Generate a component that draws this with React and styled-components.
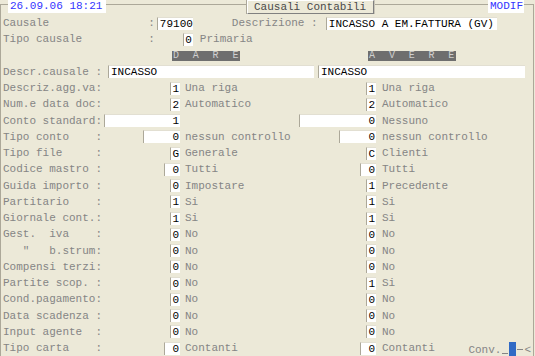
import styled, { createGlobalStyle } from "styled-components";

const GlobalStyle = createGlobalStyle`
    html, body {
        margin: 0;
        padding: 0;
        background: #ece9d8;
    }
    body {
        width: 535px;
        height: 356px;
        overflow: hidden;
        font-family: "Liberation Mono", "Courier New", monospace;
        font-size: 11px;
    }
`;

const Window = styled.div`
    width: 535px;
    height: 356px;
    box-sizing: border-box;
    padding-top: 4px;
    background: #ece9d8;
    overflow: hidden;
`;

const Frame = styled.div`
    height: 100%;
    box-sizing: border-box;
    margin-right: 1px;
    padding-left: 2px;
    border: 1px solid #aca899;
    border-bottom: none;
`;

const TopBar = styled.div`
    display: flex;
    align-items: flex-start;
    height: 15px;
    margin-top: -5px;
`;

const Badge = styled.div`
    margin-left: ${p => p.$ml}px;
    width: ${p => p.$w}px;
    height: 13px;
    box-sizing: border-box;
    padding-left: 2px;
    line-height: 13px;
    background: #fff;
    color: #3434ff;
    white-space: pre;
`;

const TitleTab = styled.div`
    margin-left: 141px;
    width: 127px;
    height: 14px;
    box-sizing: border-box;
    padding-left: 6px;
    line-height: 12px;
    background: #ece9d8;
    color: #4a4a4a;
    border: 1px solid #fff;
    border-right-color: #808080;
    border-bottom-color: #808080;
    box-shadow: -1px 0 0 #aca899, 1px 0 0 #c8c5b8;
`;

const Row = styled.div`
    display: flex;
    align-items: center;
    height: 16.25px;
    white-space: pre;
`;

const GridRow = styled.div`
    display: grid;
    grid-template-columns: 177px 116px 80px 1fr;
    align-items: center;
    height: 16.25px;
    white-space: pre;
`;

const LeftCell = styled.div`
    display: flex;
    justify-content: space-between;
    align-items: center;
`;

const BoxCell = styled.div`
    display: flex;
    justify-content: flex-end;
    align-items: center;
`;

const Label = styled.span`
    color: #858585;
    margin-left: ${p => p.$ml || 0}px;
    width: ${p => (p.$w ? `${p.$w}px` : "auto")};
    flex-shrink: 0;
`;

const Desc = styled.span`
    color: #858585;
    padding-left: ${p => p.$pl || 0}px;
    margin-left: ${p => p.$ml || 0}px;
`;

const Field = styled.span`
    display: block;
    flex-shrink: 0;
    width: ${p => p.$w}px;
    height: 13px;
    box-sizing: border-box;
    margin-left: ${p => p.$ml || 0}px;
    padding: ${p => (p.$left ? "0 0 0 2px" : "0 1px 0 0")};
    text-align: ${p => (p.$left ? "left" : "right")};
    line-height: 13px;
    background: #fff;
    color: #000;
    border-left: 1px solid #aca899;
    border-top: 1px solid #e2dfd2;
    overflow: hidden;
`;

const SectionTag = styled.div`
    margin-left: ${p => p.$ml}px;
    width: ${p => p.$w}px;
    height: 10px;
    font-size: 10px;
    line-height: 10px;
    letter-spacing: 0.6px;
    background: #6e6e6e;
    color: #cfcfcf;
    text-align: center;
    overflow: hidden;
`;

const LastCell = styled.div`
    display: flex;
    align-items: center;
    padding: 0 2px 0 6px;
`;

const Conv = styled.div`
    display: flex;
    align-items: flex-end;
    gap: 1px;
    margin-left: auto;
    height: 16px;
    color: #858585;
`;

const Dash = styled.span`
    width: 6px;
    height: 1px;
    margin-bottom: ${p => p.$mb}px;
    background: #858585;
`;

const Cursor = styled.span`
    width: 7px;
    height: 14px;
    background: #316ac5;
`;

const rows = [
    { label: "Descriz.agg.va:", l: ["1", 10, "Una riga"], r: ["1", 10, "Una riga"] },
    { label: "Num.e data doc:", l: ["2", 10, "Automatico"], r: ["2", 10, "Automatico"] },
    { label: "Conto standard:", l: ["1", 76, ""], r: ["0", 77, "Nessuno"] },
    { label: "Tipo conto    :", l: ["0", 37, "nessun controllo"], r: ["0", 37, "nessun controllo"] },
    { label: "Tipo file     :", l: ["G", 10, "Generale"], r: ["C", 10, "Clienti"] },
    { label: "Codice mastro :", l: ["0", 16, "Tutti"], r: ["0", 16, "Tutti"] },
    { label: "Guida importo :", l: ["0", 10, "Impostare"], r: ["1", 10, "Precedente"] },
    { label: "Partitario    :", l: ["1", 10, "Si"], r: ["1", 10, "Si"] },
    { label: "Giornale cont.:", l: ["1", 10, "Si"], r: ["1", 10, "Si"] },
    { label: "Gest.  iva    :", l: ["0", 10, "No"], r: ["0", 10, "No"] },
    { label: "   \"   b.strum:", l: ["0", 10, "No"], r: ["0", 10, "No"] },
    { label: "Compensi terzi:", l: ["0", 10, "No"], r: ["0", 10, "No"] },
    { label: "Partite scop. :", l: ["0", 10, "No"], r: ["1", 10, "Si"] },
    { label: "Cond.pagamento:", l: ["0", 10, "No"], r: ["0", 10, "No"] },
    { label: "Data scadenza :", l: ["0", 10, "No"], r: ["0", 10, "No"] },
    { label: "Input agente  :", l: ["0", 10, "No"], r: ["0", 10, "No"] },
    { label: "Tipo carta    :", l: ["0", 16, "Contanti"], r: ["0", 16, "Contanti"], conv: true },
];

const App = () => {
    return (
        <Window>
            <GlobalStyle />
            <Frame>
                <TopBar>
                    <Badge $ml={5} $w={98}>26.09.06 18:21</Badge>
                    <TitleTab>Causali Contabili</TitleTab>
                    <Badge $ml={114} $w={36}>MODIF</Badge>
                </TopBar>

                <Row>
                    <Label>{"Causale               :"}</Label>
                    <Field $w={36} $ml={2} $left>79100</Field>
                    <Label $ml={39} $w={94}>Descrizione :</Label>
                    <Field $w={171} $left>INCASSO A EM.FATTURA (GV)</Field>
                </Row>
                <Row>
                    <Label>{"Tipo causale          :"}</Label>
                    <Field $w={10} $ml={28}>0</Field>
                    <Desc $ml={7}>Primaria</Desc>
                </Row>
                <Row>
                    <SectionTag $ml={169} $w={68}>D  A  R  E</SectionTag>
                    <SectionTag $ml={128} $w={88}>A  V  E  R  E</SectionTag>
                </Row>
                <Row>
                    <Label $w={105}>Descr.causale :</Label>
                    <Field $w={206} $left>INCASSO</Field>
                    <Field $w={207} $ml={4} $left>INCASSO</Field>
                </Row>

                {rows.map(row => (
                    <GridRow key={row.label}>
                        <LeftCell>
                            <Label>{row.label}</Label>
                            <Field $w={row.l[1]}>{row.l[0]}</Field>
                        </LeftCell>
                        <Desc $pl={5}>{row.l[2]}</Desc>
                        <BoxCell>
                            <Field $w={row.r[1]}>{row.r[0]}</Field>
                        </BoxCell>
                        <LastCell>
                            <Desc>{row.r[2]}</Desc>
                            {row.conv && (
                                <Conv>
                                    <span>Conv.</span>
                                    <Dash $mb={2} />
                                    <Cursor />
                                    <Dash $mb={6} />
                                    <span>{"<"}</span>
                                </Conv>
                            )}
                        </LastCell>
                    </GridRow>
                ))}
            </Frame>
        </Window>
    );
};

export default App;
